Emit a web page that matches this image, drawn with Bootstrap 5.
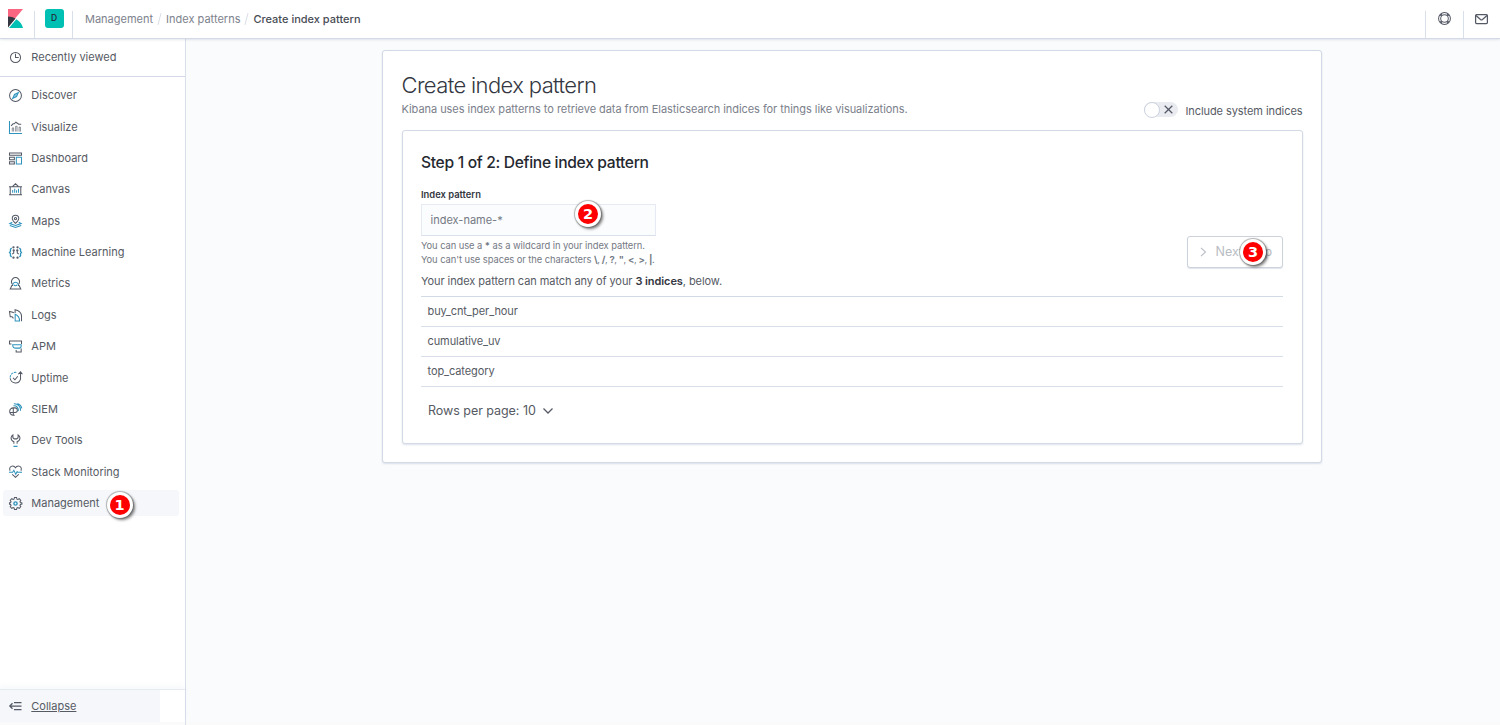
<!DOCTYPE html>
<html lang="en">
<head>
<meta charset="utf-8">
<title>Create index pattern - Kibana</title>
<meta name="viewport" content="width=device-width, initial-scale=1">
<link href="https://cdn.jsdelivr.net/npm/bootstrap@5.3.0/dist/css/bootstrap.min.css" rel="stylesheet">
<style>
body{font-family:Inter,"Noto Sans",sans-serif;font-size:11px;line-height:1.5;color:#565a63;background:#fafbfd;height:725px;overflow:hidden}
svg{display:block;flex:none;overflow:visible}
.k{fill:none;stroke:#545965;stroke-width:1.25}
.k .b{stroke:#2f93bd}
.topbar{height:39px;border-bottom:1px solid #d3dae6;box-shadow:0 1px 2px rgba(90,110,150,.16);position:relative;z-index:2}
.topbar-cell{height:38px;width:38px}
.topbar-rule{width:1px;height:27px;background:#d9e0ea;align-self:flex-end}
.space-tile{width:19px;height:19px;border-radius:3px;background:#00bfb3;color:#223;font-size:8.500px;font-weight:500}
.crumb{color:#7d828d}
.crumb-sep{width:1px;height:12px;background:#d9dee6;transform:rotate(15deg);margin:0 6px}
.crumb-now{color:#484c55;font-weight:500}
.side{width:186px;border-right:1px solid #d9e0ea}
.recent{height:38px;border-bottom:1px solid #d3dae6;padding-left:9px}
.side-nav{padding-top:6px}
.side-item{height:25.35px;margin:0 6px 6px 3px;padding-left:6px;border-radius:3px}
.side-item.on{background:#f5f7fa}
.side-label{margin-left:9.300px}
.fold{height:33px;border-top:1px solid #e6ebf2;box-shadow:0 -3px 5px rgba(90,110,150,.05);}
.fold-link{width:160px;background:#f5f7fb;padding-left:9px}
.foot{height:3px;background:#fafafa}
.panel{background:#fff;border:1px solid #d3dae6;border-radius:3px;box-shadow:0 1px 2px rgba(90,110,150,.2)}
.outer{width:940px;height:413px;margin-left:196px;margin-top:11px;padding:19px 18.5px}
.inner{height:314px;margin-top:12px;padding:20px 19px 19px 18.500px}
h1{font-size:22px;font-weight:300;line-height:31px;color:#343741;letter-spacing:-.62px}
h2{font-size:15.6px;font-weight:500;line-height:24px;color:#25282f;letter-spacing:-.31px}
.sub{color:#7b808b;line-height:16px;letter-spacing:-.052px}
.switch-track{width:34px;height:15px;border-radius:8px;background:#e9ebf0;padding-right:5px}
.switch-knob{width:16px;height:16px;border-radius:50%;background:#fff;border:1px solid #cbd2de;}
.include{letter-spacing:-.07px;margin-left:7px}
.flabel{font-size:9.4px;font-weight:600;line-height:14px;color:#33363e}
.field{width:235px;height:32px;border:1px solid #e6eaf2;border-bottom-color:#d9e0ea;background:#fbfcfd;border-radius:0;padding:0 8.5px;color:#747984}
.help{font-size:9.4px;line-height:14px;color:#747984;letter-spacing:-.07px}
.chars{letter-spacing:-.42px}
.match{letter-spacing:-.075px;margin:5px 0 6px}
.next{width:96px;height:32px;border:1px solid #ccd1da;border-radius:3px;box-shadow:0 1px 1px rgba(90,110,150,.18);color:#b9bdc4;font-size:12.5px}
.idx{border-top:1px solid #d3dae6;letter-spacing:-.09px}
.idx li{height:30px;border-bottom:1px solid #d8dfe9;padding-left:6.5px}
.rows{font-size:12.5px;line-height:18px;letter-spacing:-.04px}
.step-badge{position:absolute;width:26px;height:26px;border-radius:50%;background:#f00;border:3px solid #fff;box-shadow:0 0 1px 1px rgba(70,70,70,.4),2px 2px 3px rgba(0,0,0,.5);color:#fff;font:bold 14.500px/20px "DejaVu Sans",sans-serif;text-align:center;z-index:3}
</style>
</head>
<body class="d-flex flex-column">
<header class="topbar bg-white d-flex align-items-center">
  <div class="topbar-cell d-flex align-items-center" style="width:34px;padding-left:8px">
    <svg width="15" height="19" viewBox="0 0 15 19" style="margin-top:-2px"><path fill="#fa6682" d="M0 0h15L0 18z"/><path fill="#343741" d="M0 7.4c2.800 0 5.300.8 7.500 2.100L0 18.500z"/><path fill="#00bfb3" d="M8.300 10.200C11.800 12.200 14.300 15.300 15 19H1z"/></svg>
  </div>
  <div class="topbar-rule"></div>
  <div class="topbar-cell d-flex align-items-center justify-content-center" style="width:38px"><div class="space-tile d-flex align-items-center justify-content-center" style="margin-top:-2px">D</div></div>
  <div class="topbar-rule" style="margin-left:-1px"></div>
  <nav class="d-flex align-items-center ms-2 ps-1">
    <span class="crumb">Management</span><i class="crumb-sep"></i><span class="crumb">Index patterns</span><i class="crumb-sep"></i><span class="crumb-now">Create index pattern</span>
  </nav>
  <div class="ms-auto topbar-rule"></div>
  <div class="topbar-cell d-flex align-items-center justify-content-center" style="width:37px">
    <svg class="k" width="13" height="13" viewBox="0 0 16 16" style="margin-top:-1px"><circle cx="8" cy="8" r="7.300"/><circle cx="8" cy="8" r="4.700"/><path stroke-width="2.600" d="M2.900 2.900l1.800 1.800M13.100 2.900l-1.800 1.800M2.900 13.100l1.800-1.800M13.100 13.100l-1.800-1.800"/></svg>
  </div>
  <div class="topbar-rule"></div>
  <div class="topbar-cell d-flex align-items-center justify-content-center" style="width:36px">
    <svg class="k" width="13" height="10" viewBox="0 0 13 10" style="margin-left:-1px"><rect x=".6" y=".6" width="11.800" height="9" rx="1"/><path d="M1 1.500l4.500 4q1 .8 2 0l4.500-4"/></svg>
  </div>
</header>
<div class="d-flex flex-grow-1">
  <aside class="side bg-white d-flex flex-column">
    <div class="recent d-flex align-items-center">
      <svg class="k" width="13" height="13" viewBox="0 0 16 16"><circle cx="8" cy="8" r="6.200"/><path d="M8 3.500V8h4"/></svg><span class="side-label">Recently viewed</span>
    </div>
    <nav class="side-nav flex-grow-1">
      <div class="side-item d-flex align-items-center"><svg class="k" width="13" height="13" viewBox="0 0 16 16"><circle cx="8" cy="8" r="7.300"/><path class="b" fill="#8fc5de" d="M11.500 4.500L9.300 9.300 4.500 11.500l2.200-4.800z"/></svg><span class="side-label">Discover</span></div>
      <div class="side-item d-flex align-items-center"><svg class="k" width="13" height="13" viewBox="0 0 16 16"><path class="b" d="M.6 0v15.400H16"/><path d="M2.500 6l2.500-2.500h1.500L8.500 1.500 12 4h3"/><path stroke-width=".8" d="M4 13V8.500h1.700V13M8.200 13V6.500h1.700V13M12.400 13V7.500h1.700V13"/></svg><span class="side-label">Visualize</span></div>
      <div class="side-item d-flex align-items-center"><svg class="k" width="13" height="13" viewBox="0 0 16 16"><path d="M.6 1.100h14.800v3H.6zM.6 6.600h6v2.800h-6zM.6 11.900h6v3h-6z"/><path class="b" d="M9 6.600h6.400v8.300H9z"/></svg><span class="side-label">Dashboard</span></div>
      <div class="side-item d-flex align-items-center"><svg class="k" width="13" height="13" viewBox="0 0 16 16"><path d="M1.500 4.500h13v10h-13zM0 4.500h16M0 14.500h16M4.500 4.300L8 1l3.500 3.300"/><path class="b" d="M4.500 8.500V12M7 7v5M9.300 9v3M11.700 7v5"/></svg><span class="side-label">Canvas</span></div>
      <div class="side-item d-flex align-items-center"><svg class="k" width="13" height="13" viewBox="0 0 16 16"><path d="M8 10.300C5.500 8 4 6.300 4 4.300a4 4 0 018 0c0 2-1.500 3.700-4 6z"/><circle cx="8" cy="4.400" r="1.400"/><path class="b" d="M4 9L1 10.500l7 2.300 7-2.300L12 9M1 13l7 2.400 7-2.400"/></svg><span class="side-label">Maps</span></div>
      <div class="side-item d-flex align-items-center"><svg class="k" width="13" height="13" viewBox="0 0 16 16"><circle cx="5.500" cy="1.600" r=".8"/><circle cx="10.500" cy="1.600" r=".8"/><circle cx="5.500" cy="14.400" r=".8"/><circle cx="10.500" cy="14.400" r=".8"/><circle cx="5.800" cy="5.500" r=".8"/><circle cx="10.200" cy="5.500" r=".8"/><path d="M5.800 6.500v2L4 10M10.200 6.500v2L12 10"/><path class="b" stroke-width="1.600" d="M3.200 2.500L1.800 4v2.500L.6 8l1.200 1.500V12l1.400 1.500M12.800 2.500L14.200 4v2.500L15.400 8l-1.200 1.500V12l-1.400 1.500"/></svg><span class="side-label">Machine Learning</span></div>
      <div class="side-item d-flex align-items-center"><svg class="k" width="13" height="13" viewBox="0 0 16 16"><path d="M4.500 9.300A5 5 0 1111.500 9.300M5 10.500H3.500L1.500 14.800h13l-2-4.300H11"/><path class="b" d="M4.500 9.300C5 7.500 6.300 6.500 8 6.500s3 1 3.500 2.800M6 9.500a2.200 2.200 0 004 0"/></svg><span class="side-label">Metrics</span></div>
      <div class="side-item d-flex align-items-center"><svg class="k" width="13" height="13" viewBox="0 0 16 16"><path d="M5.500 11.500L3.800 9.500H1.500L.6 3l4 1 1.500.8M7.500 5V.8C12 1.500 15.400 5 15.400 9v6"/><path class="b" d="M7.600 6.500v8.400h5.400c0-4-2-7-5.400-8.400z"/></svg><span class="side-label">Logs</span></div>
      <div class="side-item d-flex align-items-center"><svg class="k" width="13" height="13" viewBox="0 0 16 16"><path d="M3 4.800H.6V1.100h14.800v3.700M8.800 12.300v2.600h6.200V10.500"/><path class="b" d="M4.500 5.800h10.500v1.700q0 2.500-2.500 2.500H8.500q-4 0-4-4.200z"/></svg><span class="side-label">APM</span></div>
      <div class="side-item d-flex align-items-center"><svg class="k" width="13" height="13" viewBox="0 0 16 16"><path class="b" d="M9 1.700A6.500 6.500 0 001.500 9" stroke-dasharray="3 1"/><path d="M1.500 9a6.500 6.500 0 0012.700 1V2M11.300 4l2.900-3 2.300 3M5 8.500l2.300 2.300 3.500-4.300"/></svg><span class="side-label">Uptime</span></div>
      <div class="side-item d-flex align-items-center"><svg class="k" width="13" height="13" viewBox="0 0 16 16"><path d="M5.300 15V6a4.500 4.500 0 100 9M5.300 6H7.500a2.800 2.800 0 010 5.600H1.500M5.300 15H7"/><path class="b" d="M5.500 3.500C9.500 3 12 6 11.500 10M6 .9C11 .5 14.500 4.500 14.200 9.500M10.500.6C13 1.600 15.300 4 15.800 6.500"/></svg><span class="side-label">SIEM</span></div>
      <div class="side-item d-flex align-items-center"><svg class="k" width="13" height="13" viewBox="0 0 16 16"><path d="M6 12V9.500C3.500 8.500 2.500 7 2.500 5c0-1.700.8-3 2.300-4v3.500L6.500 6h3l1.700-1.500V1c1.500 1 2.300 2.300 2.300 4 0 2-1 3.500-3.500 4.500V12"/><path class="b" stroke-width="1.500" d="M5.500 15.200h5"/></svg><span class="side-label">Dev Tools</span></div>
      <div class="side-item d-flex align-items-center"><svg class="k" width="13" height="13" viewBox="0 0 16 16"><path d="M1.300 7C-.2 3.500 2 1.100 4.500 1.100 6.200 1.100 7.300 2 8 3.300 8.700 2 9.800 1.100 11.500 1.100 14 1.100 16.200 3.500 14.700 7M4 11.500l4 3.700 4-3.700"/><path class="b" d="M0 9h4.500L6 6.500l2.300 5L10 8l1 1h5"/></svg><span class="side-label">Stack Monitoring</span></div>
      <div class="side-item on position-relative d-flex align-items-center"><svg class="k" width="13" height="13" viewBox="0 0 16 16"><path d="M6.700.7h2.600l.5 1.900 1.100.5 1.700-1 1.900 1.900-1 1.700.5 1.100 1.900.5v1.400l-1.900.5-.5 1.100 1 1.700-1.900 1.900-1.700-1-1.100.5-.5 1.900H6.700l-.5-1.900-1.100-.5-1.700 1-1.900-1.900 1-1.700-.5-1.100-1.400-.5V7.300l1.400-.5.5-1.100-1-1.700 1.900-1.900 1.700 1 1.100-.5z"/><circle class="b" cx="8" cy="8" r="2" stroke-width="1.700"/></svg><span class="side-label">Management</span><span class="step-badge" style="left:103.500px;top:2px">1</span></div>
    </nav>
    <div class="fold d-flex"><div class="fold-link d-flex align-items-center">
      <svg class="k" width="13" height="10" viewBox="0 0 13 10"><path d="M5 1.500h7.500M.8 5h11.700M5 8.500h7.500M3.500 2.200L.8 5l2.700 2.800"/></svg><span class="side-label text-decoration-underline">Collapse</span></div></div>
    <div class="foot"></div>
  </aside>
  <main class="flex-grow-1 d-flex flex-column">
    <section class="panel outer">
      <div class="d-flex justify-content-between">
        <div><h1 class="m-0">Create index pattern</h1><p class="sub mb-0">Kibana uses index patterns to retrieve data from Elasticsearch indices for things like visualizations.</p></div>
        <div class="d-flex align-items-center" style="height:17px;margin-top:31px">
          <div class="switch-track d-flex align-items-center justify-content-between"><div class="switch-knob"></div><svg class="k" width="9" height="9" viewBox="0 0 9 9"><path d="M.7.7l7.600 7.600M8.300.7L.7 8.300"/></svg></div>
          <span class="include pt-1" style="line-height:15px">Include system indices</span>
        </div>
      </div>
      <section class="panel inner">
        <h2 class="m-0">Step 1 of 2: Define index pattern</h2>
        <div class="d-flex justify-content-between">
          <div style="margin-top:13px">
            <div class="flabel">Index pattern</div>
            <div class="field position-relative d-flex align-items-center" style="margin-top:2px">index-name-*<span class="step-badge" style="left:153px;top:-4px">2</span></div>
            <div class="help" style="margin-top:3px">You can use a <b>*</b> as a wildcard in your index pattern.<br>You can't use spaces or the characters <span class="chars"><b>\</b>, <b>/</b>, <b>?</b>, <b>"</b>, <b>&lt;</b>, <b>&gt;</b>, <b>|</b>.</span></div>
          </div>
          <div class="next bg-white position-relative d-flex align-items-center" style="margin-top:61px;padding-left:12px"><svg width="7" height="10" viewBox="0 0 7 10" fill="none" stroke="#b9bdc4" stroke-width="1.100"><path d="M1 .8L5.500 5 1 9.200"/></svg><span style="margin-left:9px">Next step</span><span class="step-badge" style="left:52.500px;top:1.500px">3</span></div>
        </div>
        <p class="match">Your index pattern can match any of your <b class="fw-semibold" style="color:#343741">3 indices</b>, below.</p>
        <ul class="idx list-unstyled m-0">
          <li class="d-flex align-items-center">buy_cnt_per_hour</li>
          <li class="d-flex align-items-center">cumulative_uv</li>
          <li class="d-flex align-items-center">top_category</li>
        </ul>
        <div class="rows d-flex align-items-center" style="margin:15px 0 0 7px"><span>Rows per page: 10</span><svg class="k" style="margin-left:7px" width="10" height="6" viewBox="0 0 10 6"><path d="M.5.500L5 5 9.500.5"/></svg></div>
      </section>
    </section>
    <div class="foot mt-auto"></div>
  </main>
</div>
<script src="https://cdn.jsdelivr.net/npm/bootstrap@5.3.0/dist/js/bootstrap.bundle.min.js"></script>
</body>
</html>
